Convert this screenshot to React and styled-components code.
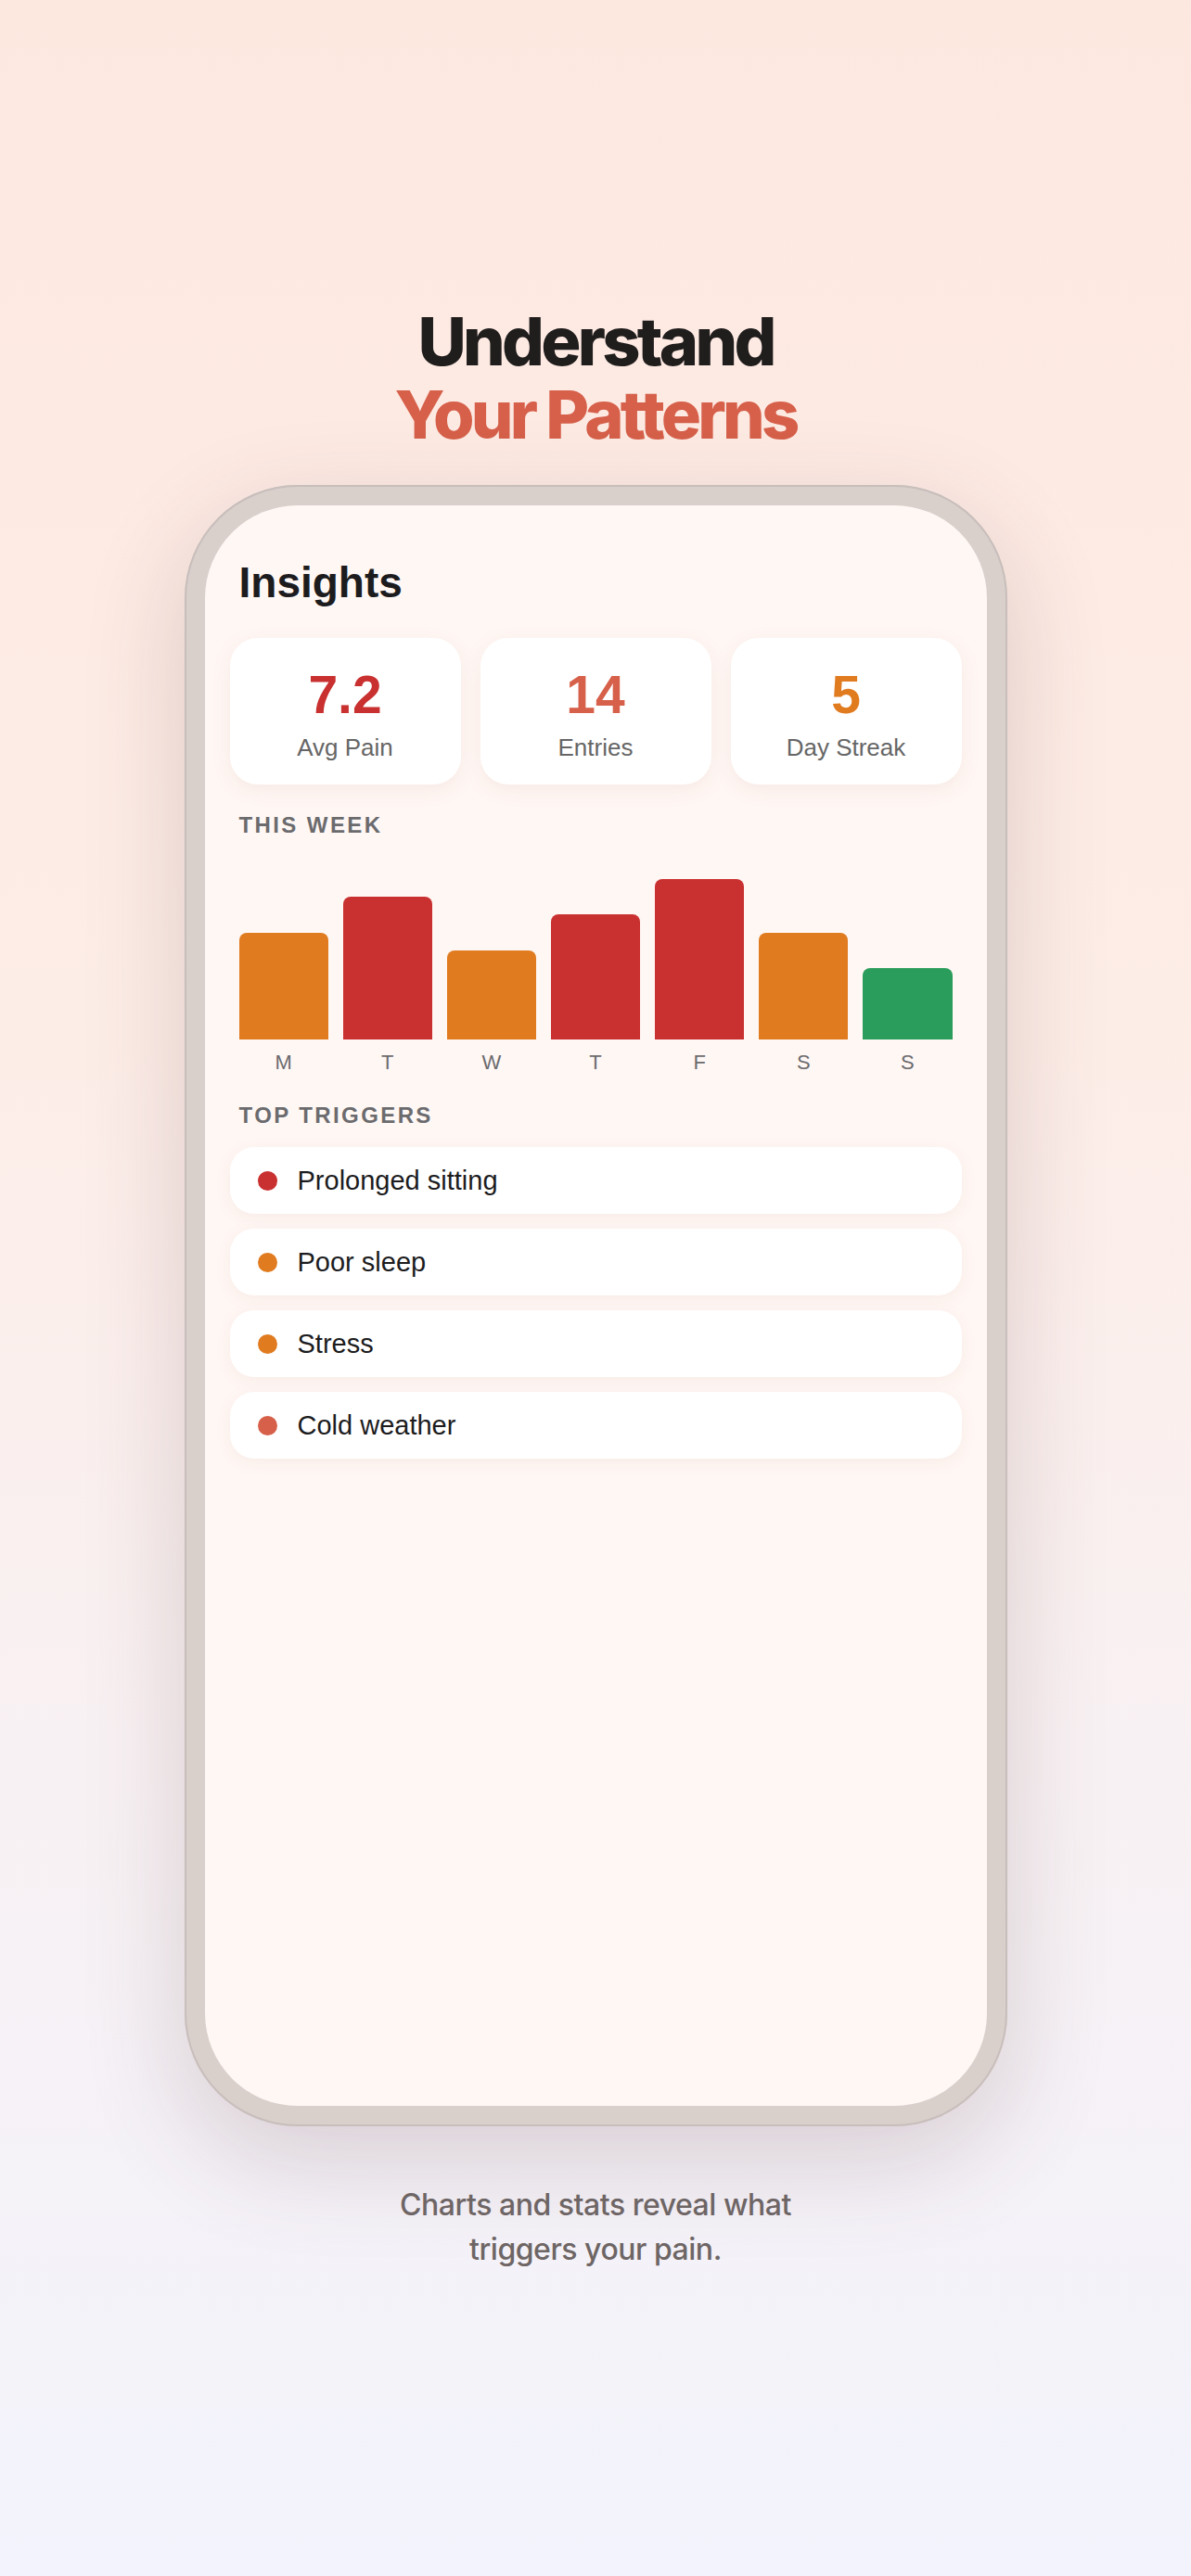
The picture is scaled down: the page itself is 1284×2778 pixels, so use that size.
import styled, { createGlobalStyle } from "styled-components";

const GlobalStyle = createGlobalStyle`
  * {
    box-sizing: border-box;
  }
  body {
    margin: 0;
    font-family: "Liberation Sans", Arial, sans-serif;
  }
`;

const Page = styled.div`
  min-height: 2778px;
  padding-top: 328px;
  display: flex;
  flex-direction: column;
  align-items: center;
  background: linear-gradient(180deg, #fde8e0 0%, #fdede7 40%, #f8f1f3 68%, #f2f3fc 100%);
`;

const Headline = styled.h1`
  margin: 0;
  font-family: Inter, "Liberation Sans", sans-serif;
  font-size: 72px;
  font-weight: 800;
  line-height: 1.1;
  letter-spacing: -0.052em;
  text-align: center;
  color: #201d1d;
`;

const Accent = styled.span`
  display: block;
  color: #d6604a;
`;

const Phone = styled.div`
  margin-top: 37px;
  width: 887px;
  height: 1770px;
  padding: 22px;
  border-radius: 122px;
  background: #d9d0cc;
  box-shadow: inset 0 0 0 2px #c8bebb, 0 36px 110px rgba(90, 55, 60, 0.19);
`;

const Screen = styled.div`
  height: 100%;
  border-radius: 100px;
  background: #fff7f4;
  padding: 60px 37px 0;
  overflow: hidden;
`;

const ScreenTitle = styled.h2`
  margin: 0;
  font-size: 46px;
  font-weight: 700;
  line-height: 1;
  color: #1c1c1e;
`;

const StatGrid = styled.div`
  margin: 37px -10px 0;
  display: grid;
  grid-template-columns: repeat(3, 1fr);
  gap: 21px;
`;

const StatCard = styled.div`
  height: 158px;
  padding-top: 33px;
  border-radius: 30px;
  background: #ffffff;
  box-shadow: 0 6px 20px rgba(190, 140, 120, 0.12);
  display: flex;
  flex-direction: column;
  align-items: center;
  gap: 15px;
`;

const StatValue = styled.div`
  font-size: 57px;
  font-weight: 700;
  line-height: 1;
  color: ${(p) => p.$color};
`;

const StatLabel = styled.div`
  font-size: 26px;
  line-height: 1;
  color: #666666;
`;

const SectionLabel = styled.h3`
  margin: ${(p) => p.$top}px 0 0;
  font-size: 24px;
  font-weight: 700;
  line-height: 1;
  letter-spacing: 0.1em;
  color: #6b6b6e;
`;

const Chart = styled.div`
  margin-top: 26px;
  display: grid;
  grid-template-columns: repeat(7, 1fr);
  gap: 16px;
`;

const Day = styled.div`
  display: flex;
  flex-direction: column;
  align-items: center;
  gap: 14px;
`;

const BarSlot = styled.div`
  width: 100%;
  height: 193px;
  display: flex;
  align-items: flex-end;
`;

const Bar = styled.div`
  width: 100%;
  border-radius: 8px 8px 0 0;
  background: ${(p) => p.$color};
`;

const DayLabel = styled.span`
  font-size: 22px;
  line-height: 1;
  color: #6b6b6e;
`;

const TriggerList = styled.div`
  margin: 22px -10px 0;
  display: flex;
  flex-direction: column;
  gap: 16px;
`;

const TriggerRow = styled.div`
  height: 72px;
  padding: 0 30px;
  border-radius: 26px;
  background: #ffffff;
  box-shadow: 0 4px 16px rgba(190, 140, 120, 0.1);
  display: flex;
  align-items: center;
  gap: 22px;
  font-size: 29px;
  color: #1c1c1e;
`;

const Dot = styled.span`
  width: 21px;
  height: 21px;
  border-radius: 50%;
  flex-shrink: 0;
  background: ${(p) => p.$color};
`;

const Caption = styled.p`
  margin: 61px 0 0;
  font-family: Inter, "Liberation Sans", sans-serif;
  font-size: 32px;
  font-weight: 500;
  line-height: 48px;
  letter-spacing: -0.015em;
  text-align: center;
  color: #6e6565;
`;

const RED = "#c93030";
const CORAL = "#d6604a";
const ORANGE = "#e07b20";
const GREEN = "#2a9d5c";

const stats = [
  { value: "7.2", label: "Avg Pain", color: RED },
  { value: "14", label: "Entries", color: CORAL },
  { value: "5", label: "Day Streak", color: ORANGE },
];

const week = [
  { day: "M", pain: 6, color: ORANGE },
  { day: "T", pain: 8, color: RED },
  { day: "W", pain: 5, color: ORANGE },
  { day: "T", pain: 7, color: RED },
  { day: "F", pain: 9, color: RED },
  { day: "S", pain: 6, color: ORANGE },
  { day: "S", pain: 4, color: GREEN },
];

const triggers = [
  { name: "Prolonged sitting", color: RED },
  { name: "Poor sleep", color: ORANGE },
  { name: "Stress", color: ORANGE },
  { name: "Cold weather", color: CORAL },
];

export default function App() {
  return (
    <>
      <GlobalStyle />
      <Page>
        <Headline>
          Understand
          <Accent>Your Patterns</Accent>
        </Headline>
        <Phone>
          <Screen>
            <ScreenTitle>Insights</ScreenTitle>
            <StatGrid>
              {stats.map((s) => (
                <StatCard key={s.label}>
                  <StatValue $color={s.color}>{s.value}</StatValue>
                  <StatLabel>{s.label}</StatLabel>
                </StatCard>
              ))}
            </StatGrid>

            <SectionLabel $top={32}>THIS WEEK</SectionLabel>
            <Chart>
              {week.map((d, i) => (
                <Day key={i}>
                  <BarSlot>
                    <Bar $color={d.color} style={{ height: `${d.pain * 10}%` }} />
                  </BarSlot>
                  <DayLabel>{d.day}</DayLabel>
                </Day>
              ))}
            </Chart>

            <SectionLabel $top={34}>TOP TRIGGERS</SectionLabel>
            <TriggerList>
              {triggers.map((t) => (
                <TriggerRow key={t.name}>
                  <Dot $color={t.color} />
                  {t.name}
                </TriggerRow>
              ))}
            </TriggerList>
          </Screen>
        </Phone>
        <Caption>
          Charts and stats reveal what
          <br />
          triggers your pain.
        </Caption>
      </Page>
    </>
  );
}
